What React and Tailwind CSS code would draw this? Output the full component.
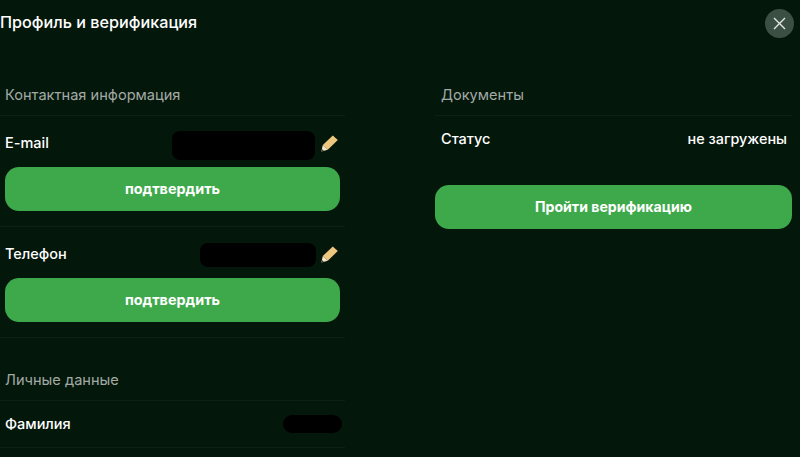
import React from "react";

const Pencil = () => (
  <svg width="17" height="17" viewBox="0 0 17 17" className="shrink-0">
    <path d="M11.8 0.4 L16.8 5 L6.8 14.8 L1.8 10 Z" fill="#eec77f" />
    <path d="M1.8 10 L6.8 14.8 L0.4 16.6 Z" fill="#f5e6c8" />
    <path d="M1 14 L2.9 15.7 L0.4 16.6 Z" fill="#4a4030" />
  </svg>
);

const Divider = () => <div className="h-px bg-[#0c2013]" />;

const SectionTitle = ({ children }) => (
  <div className="h-[42px] pt-[2px] flex items-center text-[14.6px] leading-none text-[#a3aaa5] font-normal">{children}</div>
);

const Confirm = () => (
  <button className="w-full h-11 rounded-[14px] bg-[#3ea94b] text-white text-[14.4px] font-bold flex items-center justify-center">
    подтвердить
  </button>
);

const EditRow = ({ label, maskClass }) => (
  <div className="h-[51px] flex items-center justify-between pl-[5px] pr-[7px] pt-[3px]">
    <span className="text-[14.5px] font-medium text-white">{label}</span>
    <div className="flex items-center gap-[6px]">
      <div className={`rounded-lg bg-black ${maskClass}`} />
      <Pencil />
    </div>
  </div>
);

export default function App() {
  return (
    <div
      className="h-[457px] w-[800px] overflow-hidden bg-[#04170b] text-white relative"
      style={{ fontFamily: "Inter, 'Liberation Sans', sans-serif" }}
    >
      <div className="h-[73px] pt-[11px] text-[16.2px] font-medium leading-[22px]">Профиль и верификация</div>
      <button className="absolute left-[765px] top-[9px] w-[29px] h-[29px] rounded-full bg-[#3c4f43] flex items-center justify-center">
        <svg width="13" height="13" viewBox="0 0 13 13" stroke="#e3e6e4" strokeWidth="1.4" fill="none">
          <path d="M1 1 L12 12 M12 1 L1 12" />
        </svg>
      </button>
      <div className="flex">
        <div className="w-[345px] shrink-0">
          <div className="pl-[5px]"><SectionTitle>Контактная информация</SectionTitle></div>
          <Divider />
          <EditRow label="E-mail" maskClass="w-[143px] h-[29px] mt-[5px]" />
          <div className="pl-[5px] pr-[5px]"><Confirm /></div>
          <div className="h-[15px]" />
          <Divider />
          <EditRow label="Телефон" maskClass="w-[116px] h-[24px] mt-[2px] -mr-[1px]" />
          <div className="pl-[5px] pr-[5px]"><Confirm /></div>
          <div className="h-[15px]" />
          <Divider />
          <div className="h-[20px]" />
          <div className="pl-[5px]"><SectionTitle>Личные данные</SectionTitle></div>
          <Divider />
          <div className="h-[46px] flex items-center justify-between pl-[5px] pr-[3px]">
            <span className="text-[14.5px] font-medium">Фамилия</span>
            <div className="w-[59px] h-[18px] rounded-full bg-black" />
          </div>
          <Divider />
        </div>
        <div className="ml-[90px] w-[357px] shrink-0">
          <div className="pl-[6px]"><SectionTitle>Документы</SectionTitle></div>
          <Divider />
          <div className="h-[47px] pb-[2px] flex items-center justify-between pl-[6px] pr-[5px]">
            <span className="text-[14.5px] font-medium">Статус</span>
            <span className="text-[14.4px] font-medium">не загружены</span>
          </div>
          <div className="h-[22px]" />
          <button className="w-full h-11 rounded-[14px] bg-[#3ea94b] text-white text-[14.1px] font-bold flex items-center justify-center">
            Пройти верификацию
          </button>
        </div>
      </div>
    </div>
  );
}
